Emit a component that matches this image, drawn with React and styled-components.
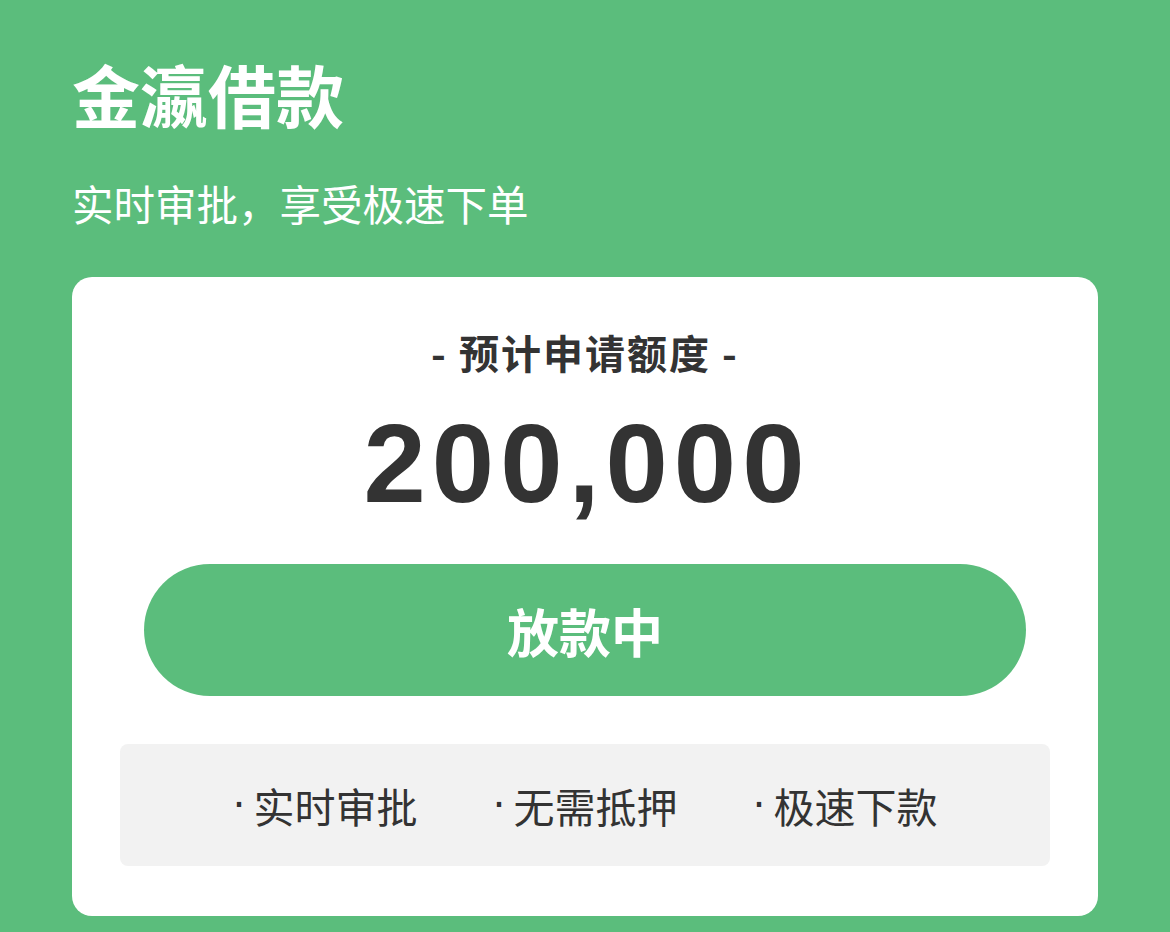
import React from "react";
import styled, { createGlobalStyle } from "styled-components";

const GREEN = "#5bbd7c";

const GlobalStyle = createGlobalStyle`
  html, body {
    margin: 0;
    padding: 0;
    background: ${GREEN};
    font-family: "Noto Sans CJK SC", "Noto Sans", sans-serif;
  }
`;

const features = ["实时审批", "无需抵押", "极速下款"];

export default function App() {
  return (
    <>
      <GlobalStyle />
      <Page>
        <Title>金瀛借款</Title>
        <Subtitle>实时审批，享受极速下单</Subtitle>
        <Card>
          <Label>- 预计申请额度 -</Label>
          <Amount>200,000</Amount>
          <LoanButton type="button">放款中</LoanButton>
          <FeatureBox>
            {features.map((f) => (
              <Feature key={f}>
                <Dot>·</Dot>
                {f}
              </Feature>
            ))}
          </FeatureBox>
        </Card>
      </Page>
    </>
  );
}

const Page = styled.div`
  display: flex;
  flex-direction: column;
  padding: 60px 72px 40px;
  min-height: 932px;
  box-sizing: border-box;
  background: ${GREEN};
`;

const Title = styled.h1`
  margin: 0;
  font-size: 68px;
  line-height: 68px;
  font-weight: 700;
  color: #fff;
`;

const Subtitle = styled.p`
  margin: 54px 0 0;
  font-size: 41.5px;
  line-height: 42px;
  font-weight: 400;
  color: #fff;
`;

const Card = styled.div`
  margin-top: 53px;
  background: #fff;
  border-radius: 20px;
  padding: 55px 48px 50px;
  display: flex;
  flex-direction: column;
  align-items: center;
`;

const Label = styled.div`
  font-size: 40px;
  line-height: 40px;
  font-weight: 700;
  color: #333;
  letter-spacing: 2px;
`;

const Amount = styled.div`
  margin-top: 36px;
  font-family: "Liberation Sans", Arial, sans-serif;
  font-size: 112px;
  line-height: 112px;
  font-weight: 700;
  color: #333;
  letter-spacing: 6px;
  padding-left: 4px;
`;

const LoanButton = styled.button`
  margin-top: 44px;
  align-self: stretch;
  margin-left: 24px;
  margin-right: 24px;
  height: 132px;
  border: none;
  border-radius: 66px;
  background: ${GREEN};
  color: #fff;
  font-family: inherit;
  font-size: 52px;
  font-weight: 700;
  cursor: pointer;
`;

const FeatureBox = styled.div`
  margin-top: 48px;
  align-self: stretch;
  height: 122px;
  background: #f2f2f2;
  border-radius: 8px;
  display: flex;
  align-items: center;
  justify-content: center;
  gap: 75px;
`;

const Feature = styled.div`
  display: flex;
  align-items: center;
  font-size: 41px;
  line-height: 41px;
  color: #333;
`;

const Dot = styled.span`
  font-family: "DejaVu Sans", sans-serif;
  margin-right: 8px;
`;
